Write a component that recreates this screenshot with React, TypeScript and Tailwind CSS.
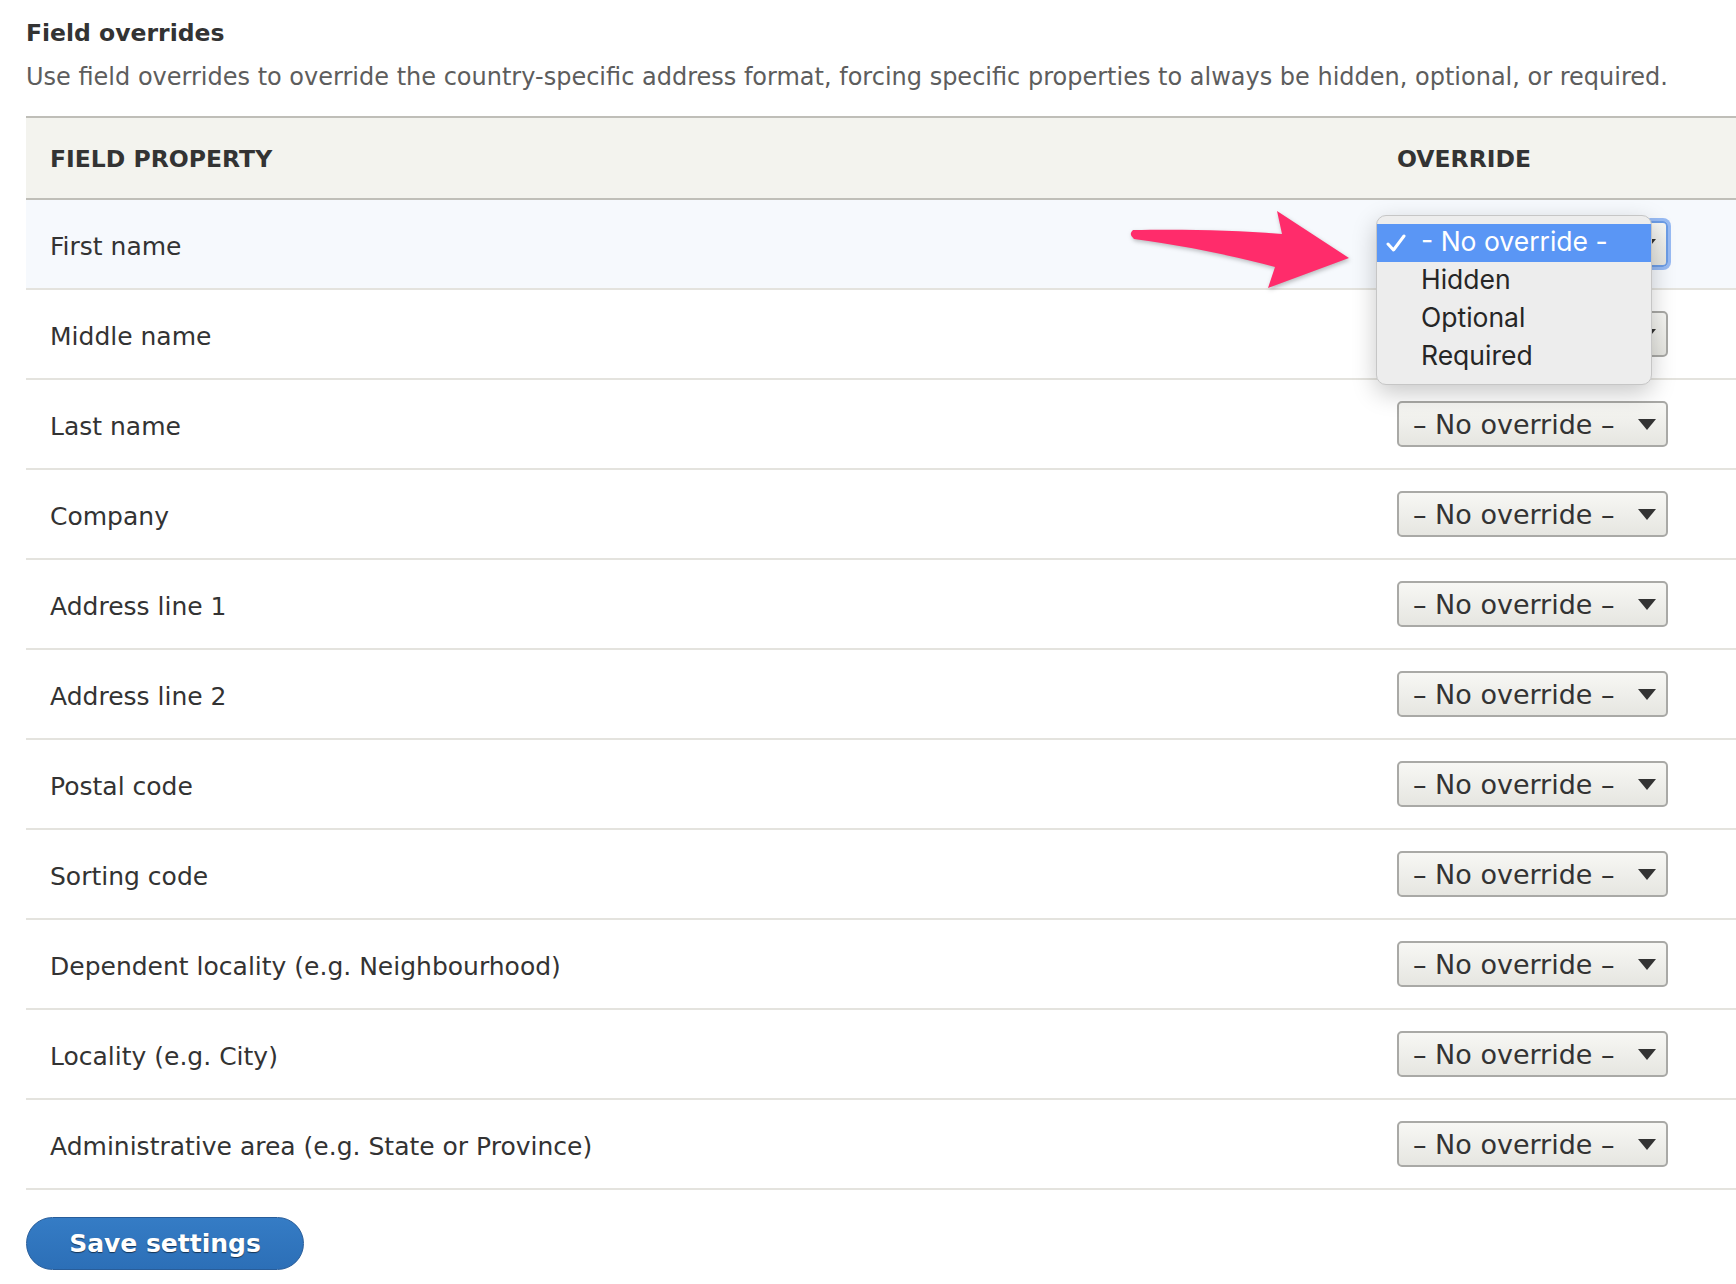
import React from "react";

const fields = [
  "First name",
  "Middle name",
  "Last name",
  "Company",
  "Address line 1",
  "Address line 2",
  "Postal code",
  "Sorting code",
  "Dependent locality (e.g. Neighbourhood)",
  "Locality (e.g. City)",
  "Administrative area (e.g. State or Province)",
];

const SelectBox: React.FC<{ focused?: boolean }> = ({ focused }) => (
  <div
    className={`w-[271px] h-[46px] flex items-center justify-between pl-[14px] pr-[10px] rounded-[5px] border-2 bg-gradient-to-b from-[#f7f7f4] to-[#e6e6e1] text-[#333] text-[27px] ${
      focused ? "border-[#6d9de6] shadow-[0_0_0_3px_rgba(120,165,240,0.75)]" : "border-[#a9a9a6]"
    }`}
  >
    <span className="leading-none pt-[1px]">– No override –</span>
    <svg width="18" height="11" viewBox="0 0 18 11">
      <path d="M0 0 L18 0 L9 11 Z" fill="#333" />
    </svg>
  </div>
);

export default function App() {
  return (
    <div
      className="relative bg-white min-h-[1284px] pl-[26px] text-[#333]"
      style={{ fontFamily: "'DejaVu Sans', 'Liberation Sans', sans-serif" }}
    >
      <div className="pt-[19px] text-[23.5px] leading-[28px] font-bold">Field overrides</div>
      <div className="mt-[16px] text-[24px] leading-[28px] text-[#5d5d5d]">
        Use field overrides to override the country-specific address format, forcing specific properties to always be hidden, optional, or required.
      </div>

      <div className="mt-[25px]">
        <div className="flex h-[84px] items-center bg-[#f3f3ee] border-y-2 border-[#bfbeb8] text-[23.5px] font-bold">
          <div className="flex-1 pl-[24px] pt-[3px]">FIELD PROPERTY</div>
          <div className="w-[339px] pt-[3px]">OVERRIDE</div>
        </div>
        {fields.map((f, i) => (
          <div
            key={f}
            className={`flex h-[90px] items-center border-b-2 border-[#e4e3de] text-[25px] ${
              i === 0 ? "bg-[#f6f9fd]" : "bg-white"
            }`}
          >
            <div className="flex-1 pl-[24px] pt-[5px]">{f}</div>
            <div className="w-[339px]">
              <SelectBox focused={i === 0} />
            </div>
          </div>
        ))}
      </div>

      <button className="mt-[27px] w-[278px] h-[53px] rounded-full border border-[#285d9a] bg-gradient-to-b from-[#357cc5] to-[#2c6fb7] text-white text-[25px] font-bold [text-shadow:0_1px_1px_rgba(0,0,0,0.55)]">
        Save settings
      </button>

      {/* pink annotation arrow */}
      <svg
        className="absolute left-[1120px] top-[200px] drop-shadow-[1px_2px_2px_rgba(0,0,0,0.25)]"
        width="240"
        height="100"
        viewBox="0 0 240 100"
      >
        <path
          d="M13 30 C 60 29, 120 30, 162 34 L 157 11 L 229 58 L 148 88 L 155 67 C 110 55, 60 45, 14 39 Q 8 34.5 13 30 Z"
          fill="#ff2c6b"
        />
      </svg>

      {/* open native dropdown */}
      <div
        className="absolute left-[1376px] top-[215px] w-[276px] py-[8px] rounded-[10px] bg-[#ededed] border border-[#c6c6c6] shadow-[0_8px_24px_rgba(0,0,0,0.22)] text-[26.5px] text-[#262626]"
        style={{ fontFamily: "Inter, 'Noto Sans', sans-serif" }}
      >
        <div className="flex items-center h-[38px] bg-[#5a96f5] text-white">
          <span className="w-[44px] pl-[9px] flex items-center">
            <svg width="20" height="20" viewBox="0 0 20 20">
              <path d="M2 11 L7.5 17 L18 3" fill="none" stroke="white" strokeWidth="3" strokeLinecap="round" strokeLinejoin="round" />
            </svg>
          </span>
          <span className="pb-[3px]">- No override -</span>
        </div>
        <div className="flex items-center h-[38px] pl-[44px] pb-[3px]">Hidden</div>
        <div className="flex items-center h-[38px] pl-[44px] pb-[3px]">Optional</div>
        <div className="flex items-center h-[38px] pl-[44px] pb-[3px]">Required</div>
      </div>
    </div>
  );
}
